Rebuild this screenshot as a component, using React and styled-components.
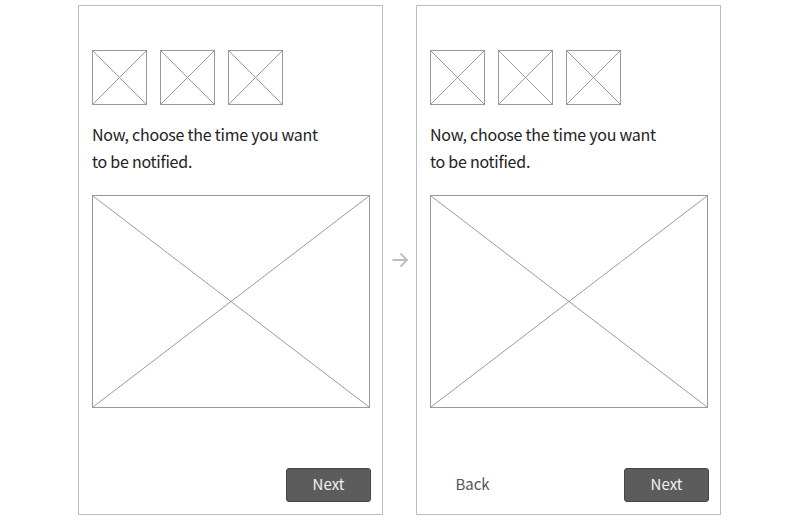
import React from "react";
import styled, { createGlobalStyle } from "styled-components";

const Global = createGlobalStyle`
  html, body { margin: 0; padding: 0; background: #ffffff; }
  body { font-family: "Noto Sans CJK JP", "Noto Sans", sans-serif; }
  * { box-sizing: border-box; }
`;

const Page = styled.div`
  width: 800px;
  height: 520px;
  display: flex;
  justify-content: flex-start;
  align-items: flex-start;
  padding: 5px 0 0 78px;
`;

const Frame = styled.div`
  width: 305px;
  height: 510px;
  border: 1px solid #bdbdbd;
  display: flex;
  flex-direction: column;
  padding: 44px 11px 12px 13px;
`;

const Connector = styled.div`
  width: 33px;
  height: 510px;
  display: flex;
  align-items: center;
  justify-content: center;
`;

const Thumbs = styled.div`
  display: flex;
  gap: 13px;
`;

const Box = styled.div`
  width: ${(p) => p.$w}px;
  height: ${(p) => p.$h}px;
  border: 1px solid #9a9a9a;
  flex-shrink: 0;
  svg { display: block; width: 100%; height: 100%; }
`;

const Prompt = styled.p`
  margin: 16px 0 0 0;
  font-size: 16px;
  line-height: 27px;
  color: #222222;
  letter-spacing: -0.25px;
`;

const Hero = styled.div`
  margin-top: 20px;
`;

const Footer = styled.div`
  margin-top: auto;
  display: flex;
  justify-content: ${(p) => (p.$both ? "space-between" : "flex-end")};
`;

const Button = styled.button`
  width: 85px;
  height: 34px;
  border-radius: 3px;
  font-family: inherit;
  font-size: 15px;
  line-height: 1;
  padding: 0 0 3px 0;
  cursor: pointer;
  border: 1px solid ${(p) => (p.$primary ? "#464646" : "transparent")};
  background: ${(p) => (p.$primary ? "#5c5c5c" : "transparent")};
  color: ${(p) => (p.$primary ? "#f2f2f2" : "#555555")};
`;

function Placeholder({ w, h }) {
  return (
    <Box $w={w} $h={h}>
      <svg viewBox="0 0 100 100" preserveAspectRatio="none">
        <line x1="0" y1="0" x2="100" y2="100" stroke="#9a9a9a" strokeWidth="1" vectorEffect="non-scaling-stroke" />
        <line x1="100" y1="0" x2="0" y2="100" stroke="#9a9a9a" strokeWidth="1" vectorEffect="non-scaling-stroke" />
      </svg>
    </Box>
  );
}

function Screen({ back }) {
  return (
    <Frame>
      <Thumbs>
        <Placeholder w={55} h={55} />
        <Placeholder w={55} h={55} />
        <Placeholder w={55} h={55} />
      </Thumbs>
      <Prompt>
        Now, choose the time you want
        <br />
        to be notified.
      </Prompt>
      <Hero>
        <Placeholder w={278} h={213} />
      </Hero>
      <Footer $both={back}>
        {back && <Button>Back</Button>}
        <Button $primary>Next</Button>
      </Footer>
    </Frame>
  );
}

export default function App() {
  return (
    <>
      <Global />
      <Page>
        <Screen />
        <Connector>
          <svg width="18" height="16" viewBox="0 0 18 16">
            <path d="M1.5 8 H16 M9.5 1.5 L16 8 L9.5 14.5" fill="none" stroke="#bdbdbd" strokeWidth="1.8" />
          </svg>
        </Connector>
        <Screen back />
      </Page>
    </>
  );
}
